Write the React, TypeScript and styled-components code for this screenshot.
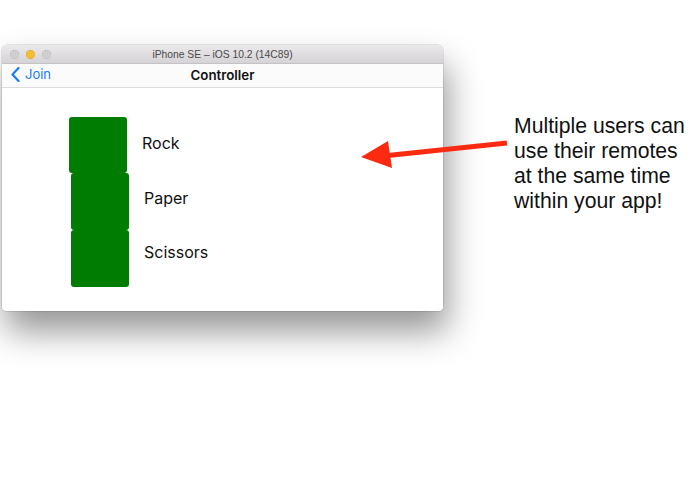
import React from "react";
import styled, { createGlobalStyle } from "styled-components";

const GlobalStyle = createGlobalStyle`
  html, body {
    margin: 0;
    padding: 0;
    background: #ffffff;
  }
  body {
    width: 695px;
    height: 494px;
    overflow: hidden;
    font-family: "Inter", "Roboto", sans-serif;
  }
`;

const Stage = styled.div`
  position: relative;
  display: flex;
  align-items: flex-start;
  padding: 45px 0 0 2px;
  height: 494px;
  box-sizing: border-box;
`;

const SimWindow = styled.div`
  width: 441px;
  height: 266px;
  display: flex;
  flex-direction: column;
  background: #ffffff;
  border-radius: 5px 5px 4px 4px;
  overflow: hidden;
  box-shadow: 0 0 0 0.5px rgba(0, 0, 0, 0.18), 4px 20px 34px rgba(0, 0, 0, 0.42);
`;

const TitleBar = styled.div`
  position: relative;
  height: 18px;
  display: flex;
  align-items: center;
  justify-content: center;
  background: linear-gradient(#ebe9eb, #d5d3d5);
  border-bottom: 1px solid #c4c2c4;
  font-family: "Liberation Sans", Arial, sans-serif;
  font-size: 10.3px;
  color: #4a4a4a;
`;

const Lights = styled.div`
  position: absolute;
  left: 8px;
  top: 5px;
  display: flex;
  gap: 7px;
`;

const Light = styled.span<{ $color: string }>`
  width: 9px;
  height: 9px;
  border-radius: 50%;
  background: ${(p) => p.$color};
  box-shadow: inset 0 0 0 0.5px rgba(0, 0, 0, 0.12);
`;

const NavBar = styled.div`
  position: relative;
  height: 24px;
  display: flex;
  align-items: center;
  justify-content: center;
  border-bottom: 1px solid #dcdcdc;
  background: #fbfbfb;
  padding-bottom: 2px;
  box-sizing: border-box;
`;

const BackButton = styled.div`
  position: absolute;
  left: 9px;
  top: 2px;
  display: flex;
  align-items: center;
  gap: 5px;
  color: #1a7cf5;
  font-size: 13px;
`;

const NavTitle = styled.div`
  font-size: 13.3px;
  font-weight: 600;
  color: #111;
`;

const Content = styled.div`
  flex: 1;
  display: flex;
  flex-direction: column;
  padding-top: 29px;
`;

const Row = styled.div<{ $shift: number; $h: number }>`
  display: flex;
  align-items: flex-start;
  height: ${(p) => p.$h}px;
  margin-left: ${(p) => 67 + p.$shift}px;
  gap: 15px;
`;

const Block = styled.div`
  width: 58px;
  height: 100%;
  background: #007d00;
  border-radius: 3px;
`;

const Label = styled.span<{ $top: number }>`
  font-size: 16px;
  line-height: 20px;
  color: #111;
  padding-top: ${(p) => p.$top}px;
`;

const Note = styled.div`
  margin: 68px 0 0 71px;
  font-family: "Liberation Sans", Arial, sans-serif;
  font-size: 21.2px;
  line-height: 25px;
  color: #111;
  white-space: nowrap;
`;

const Arrow = styled.svg`
  position: absolute;
  left: 355px;
  top: 130px;
`;

const items = [
  { name: "Rock", shift: 0, h: 56, top: 16 },
  { name: "Paper", shift: 2, h: 57, top: 15 },
  { name: "Scissors", shift: 2, h: 57, top: 12 },
];

export default function App() {
  return (
    <>
      <GlobalStyle />
      <Stage>
        <SimWindow>
          <TitleBar>
            <Lights>
              <Light $color="#d0ced0" />
              <Light $color="#f6be2f" />
              <Light $color="#d0ced0" />
            </Lights>
            iPhone SE – iOS 10.2 (14C89)
          </TitleBar>
          <NavBar>
            <BackButton>
              <svg width="9" height="15" viewBox="0 0 9 15">
                <path d="M7.5 1 L1.5 7.5 L7.5 14" fill="none" stroke="#1a7cf5" strokeWidth="2.2" strokeLinecap="round" strokeLinejoin="round" />
              </svg>
              Join
            </BackButton>
            <NavTitle>Controller</NavTitle>
          </NavBar>
          <Content>
            {items.map((it) => (
              <Row key={it.name} $shift={it.shift} $h={it.h}>
                <Block />
                <Label $top={it.top}>{it.name}</Label>
              </Row>
            ))}
          </Content>
        </SimWindow>
        <Note>
          Multiple users can
          <br />
          use their remotes
          <br />
          at the same time
          <br />
          within your app!
        </Note>
        <Arrow width="160" height="50" viewBox="0 0 160 50">
          <line x1="152" y1="13" x2="28" y2="26" stroke="#fb2b12" strokeWidth="5" />
          <polygon points="6,27 33,11 37,38" fill="#fb2b12" />
        </Arrow>
      </Stage>
    </>
  );
}
